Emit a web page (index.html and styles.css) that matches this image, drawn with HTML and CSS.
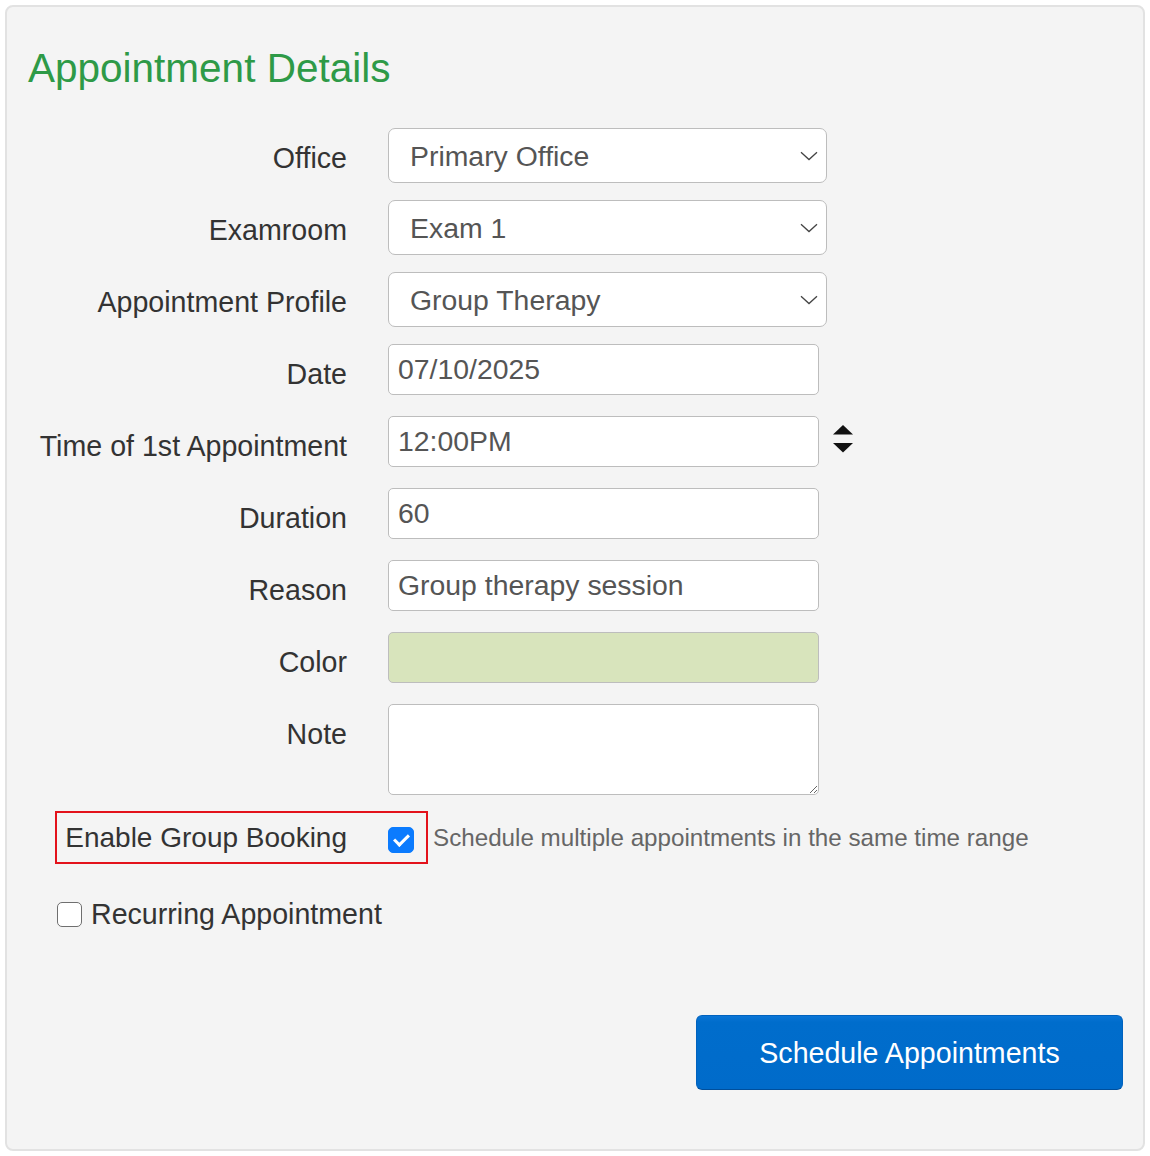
FILE: index.html
```html
<!DOCTYPE html>
<html lang="en">
<head>
<meta charset="utf-8">
<title>Appointment Details</title>
<link rel="stylesheet" href="styles.css">
</head>
<body>
<div class="panel">
  <h1 class="title">Appointment Details</h1>
  <form class="form">
    <div class="row">
      <label class="label">Office</label>
      <div class="select"><span>Primary Office</span><svg class="chev" width="18" height="10" viewBox="0 0 18 10"><path d="M1 1.2 L9 8.5 L17 1.2" fill="none" stroke="#444" stroke-width="1.3"/></svg></div>
    </div>
    <div class="row">
      <label class="label">Examroom</label>
      <div class="select"><span>Exam 1</span><svg class="chev" width="18" height="10" viewBox="0 0 18 10"><path d="M1 1.2 L9 8.5 L17 1.2" fill="none" stroke="#444" stroke-width="1.3"/></svg></div>
    </div>
    <div class="row">
      <label class="label">Appointment Profile</label>
      <div class="select"><span>Group Therapy</span><svg class="chev" width="18" height="10" viewBox="0 0 18 10"><path d="M1 1.2 L9 8.5 L17 1.2" fill="none" stroke="#444" stroke-width="1.3"/></svg></div>
    </div>
    <div class="row">
      <label class="label">Date</label>
      <input class="input" type="text" value="07/10/2025">
    </div>
    <div class="row">
      <label class="label">Time of 1st Appointment</label>
      <div class="with-spin">
        <input class="input" type="text" value="12:00PM">
        <svg class="spin" width="20" height="28" viewBox="0 0 20 28"><path d="M10 0 L20 9.5 L0 9.5 Z" fill="#111"/><path d="M0 18 L20 18 L10 27.5 Z" fill="#111"/></svg>
      </div>
    </div>
    <div class="row">
      <label class="label">Duration</label>
      <input class="input" type="text" value="60">
    </div>
    <div class="row">
      <label class="label">Reason</label>
      <input class="input" type="text" value="Group therapy session">
    </div>
    <div class="row">
      <label class="label">Color</label>
      <input class="input color" type="text" value="">
    </div>
    <div class="row row-note">
      <label class="label">Note</label>
      <textarea class="note"></textarea>
    </div>
    <div class="group-row">
      <div class="highlight">
        <label class="label group-label">Enable Group Booking</label>
        <input class="check checked" type="checkbox" checked>
      </div>
      <span class="help">Schedule multiple appointments in the same time range</span>
    </div>
    <div class="recurring">
      <input class="check" type="checkbox">
      <span class="recurring-text">Recurring Appointment</span>
    </div>
    <div class="actions">
      <button class="btn" type="button">Schedule Appointments</button>
    </div>
  </form>
</div>
</body>
</html>
```

FILE: styles.css
```css
* { box-sizing: border-box; }
html, body { margin: 0; padding: 0; background: #ffffff; }
body {
  padding: 5px;
  font-family: "Liberation Sans", Arial, Helvetica, sans-serif;
  color: #333;
}
.panel {
  height: 1146px;
  border: 2px solid #e2e2e2;
  border-radius: 8px;
  background: #f4f4f4;
  padding: 37px 20px 0 21px;
}
.title {
  margin: 0;
  font-size: 40.5px;
  line-height: 48px;
  font-weight: normal;
  color: #2e9a47;
}
.form {
  margin-top: 36px;
  display: flex;
  flex-direction: column;
}
.row {
  display: flex;
  align-items: flex-start;
  gap: 41px;
  min-height: 72px;
}
.row-note { min-height: 0; }
.label {
  width: 319px;
  flex: none;
  text-align: right;
  white-space: nowrap;
  font-size: 28.6px;
  line-height: 32px;
  padding-top: 14px;
  color: #333;
}
.select {
  width: 439px;
  height: 55px;
  border: 1.5px solid #bdbdbd;
  border-radius: 7px;
  background: #fff;
  display: flex;
  align-items: center;
  justify-content: space-between;
  padding: 0 8px 0 21px;
  font-size: 28.4px;
  line-height: 32px;
  color: #555;
  white-space: nowrap;
}
.chev { flex: none; margin-top: 1px; }
.input {
  width: 431px;
  height: 51px;
  border: 1.5px solid #bdbdbd;
  border-radius: 5px;
  background: #fff;
  padding: 0 9px;
  font-family: "Liberation Sans", Arial, Helvetica, sans-serif;
  font-size: 28.4px;
  color: #555;
  outline: none;
  margin: 0;
}
.with-spin {
  display: flex;
  align-items: center;
  gap: 14px;
}
.spin { flex: none; margin-top: -5px; }
.color { background: #d8e4bc; }
.note {
  width: 431px;
  height: 91px;
  border: 1.5px solid #bdbdbd;
  border-radius: 5px;
  background: #fff;
  margin: 0;
  padding: 6px 9px;
  font-family: "Liberation Sans", Arial, sans-serif;
  font-size: 28px;
  resize: vertical;
  display: block;
}
.group-row {
  margin-top: 16px;
  display: flex;
  align-items: center;
  margin-left: 27px;
}
.highlight {
  display: flex;
  align-items: center;
  gap: 41px;
  height: 53px;
  border: 2px solid #e3121b;
  padding: 0 12px 0 8px;
}
.group-label {
  width: 282px;
  padding-top: 0;
  font-size: 28px;
}
.check {
  appearance: none;
  -webkit-appearance: none;
  margin: 0;
  width: 25px;
  height: 25px;
  flex: none;
  border: 1.5px solid #6f6f6f;
  border-radius: 5px;
  background: #fff;
  position: relative;
}
.check.checked {
  width: 26px;
  height: 26px;
  margin-top: 5px;
  background: #0b7bfe;
  border-color: #0b7bfe;
}
.check.checked::after {
  content: "";
  position: absolute;
  left: 8px;
  top: 3px;
  width: 6px;
  height: 12px;
  border-right: 3.5px solid #fff;
  border-bottom: 3.5px solid #fff;
  transform: rotate(45deg);
}
.help {
  margin-left: 5px;
  font-size: 24.2px;
  line-height: 28px;
  color: #666;
  white-space: nowrap;
}
.recurring {
  margin-top: 34px;
  margin-left: 29px;
  display: flex;
  align-items: center;
  gap: 9px;
  height: 32px;
}
.recurring-text {
  font-size: 28.6px;
  line-height: 32px;
  color: #333;
  white-space: nowrap;
}
.actions {
  margin-top: 85px;
  display: flex;
  justify-content: flex-end;
}
.btn {
  width: 427px;
  height: 75px;
  border: 1px solid #0062be;
  border-bottom-color: #004f9c;
  border-radius: 6px;
  background: linear-gradient(#0a75d6 0, #006dcc 6px, #006bca 100%);
  color: #fff;
  font-family: "Liberation Sans", Arial, sans-serif;
  font-size: 28.6px;
  line-height: 32px;
  padding: 0;
  white-space: nowrap;
}
```
